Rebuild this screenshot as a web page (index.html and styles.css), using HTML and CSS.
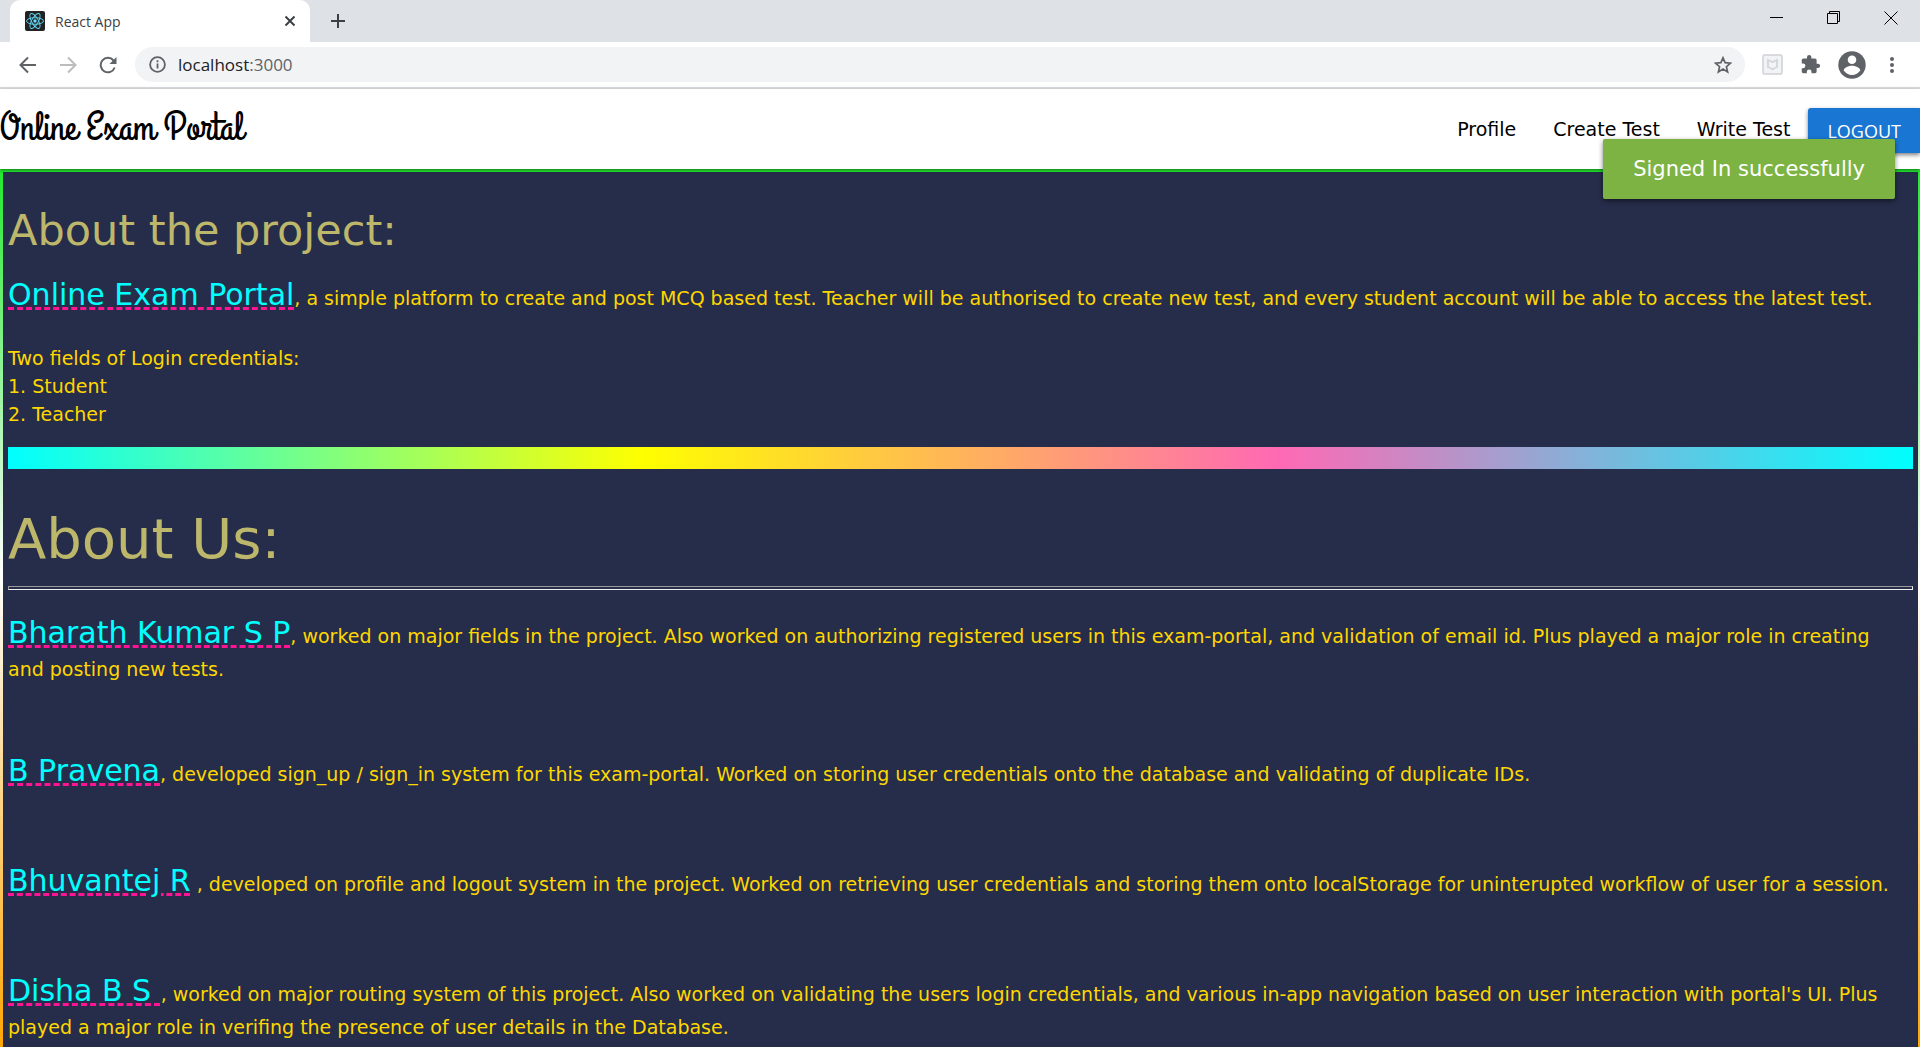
FILE: index.html
```html
<!DOCTYPE html>
<html lang="en">
<head>
<meta charset="utf-8">
<title>React App</title>
<link rel="stylesheet" href="styles.css">
</head>
<body>
<header class="browser">
  <div class="tabstrip">
    <div class="tab">
      <svg class="favicon" width="20" height="20" viewBox="0 0 20 20"><rect width="20" height="20" rx="2" fill="#222"/><g fill="none" stroke="#61dafb" stroke-width="0.9"><ellipse cx="10" cy="10" rx="8.5" ry="3.3"/><ellipse cx="10" cy="10" rx="8.5" ry="3.3" transform="rotate(60 10 10)"/><ellipse cx="10" cy="10" rx="8.5" ry="3.3" transform="rotate(120 10 10)"/></g><circle cx="10" cy="10" r="1.7" fill="#61dafb"/></svg>
      <span class="tab-title">React App</span>
      <button class="icon-btn" aria-label="Close tab"><svg width="12" height="12" viewBox="0 0 12 12"><path d="M1.5 1.5l9 9M10.5 1.5l-9 9" stroke="#3c4043" stroke-width="2"/></svg></button>
    </div>
    <button class="icon-btn new-tab" aria-label="New tab"><svg width="16" height="16" viewBox="0 0 16 16"><path d="M8 1v14M1 8h14" stroke="#3c4043" stroke-width="2"/></svg></button>
    <div class="window-controls">
      <button class="icon-btn" aria-label="Minimize"><svg width="14" height="14" viewBox="0 0 14 14"><path d="M0 6.5h13" stroke="#000"/></svg></button>
      <button class="icon-btn" aria-label="Restore"><svg width="14" height="14" viewBox="0 0 14 14"><path d="M.5 2.500h10v10h-10zM2.500 2.500v-2h10v10h-2" fill="none" stroke="#000"/></svg></button>
      <button class="icon-btn" aria-label="Close"><svg width="14" height="14" viewBox="0 0 14 14"><path d="M.5.5l13 13M13.500.5l-13 13" stroke="#000"/></svg></button>
    </div>
  </div>
  <div class="toolbar">
    <div class="nav-buttons">
      <button class="icon-btn" aria-label="Back"><svg width="18" height="18" viewBox="0 0 18 18"><path d="M17 9H2M9 1.500L1.500 9 9 16.500" fill="none" stroke="#5f6368" stroke-width="2"/></svg></button>
      <button class="icon-btn" aria-label="Forward"><svg width="18" height="18" viewBox="0 0 18 18"><path d="M1 9h15M9 1.500L16.500 9 9 16.500" fill="none" stroke="#babcbe" stroke-width="2"/></svg></button>
      <button class="icon-btn" aria-label="Reload"><svg width="18" height="18" viewBox="0 0 18 18"><path d="M15.700 11.500A7.200 7.200 0 1 1 14.500 4.500" fill="none" stroke="#5f6368" stroke-width="2"/><path d="M17.500 1v7h-7z" fill="#5f6368"/></svg></button>
    </div>
    <div class="address">
      <svg width="17" height="17" viewBox="0 0 17 17"><circle cx="8.500" cy="8.500" r="7.400" fill="none" stroke="#5f6368" stroke-width="1.800"/><path d="M8.500 7.500v5M8.500 4.300v1.900" stroke="#5f6368" stroke-width="1.800"/></svg>
      <span class="url">localhost<span class="port">:3000</span></span>
      <button class="icon-btn star" aria-label="Bookmark"><svg width="18" height="18" viewBox="0 0 18 18"><path d="M9 1.800l2.100 4.900 5.300.5-4 3.500 1.200 5.200L9 13.100l-4.600 2.800 1.200-5.200-4-3.500 5.300-.5z" fill="none" stroke="#5f6368" stroke-width="1.700"/></svg></button>
    </div>
    <div class="extensions">
      <button class="icon-btn" aria-label="Shield"><svg width="21" height="21" viewBox="0 0 21 21"><rect x="1" y="1" width="19" height="19" rx="1.500" fill="#f1f3f4" stroke="#ced1d5" stroke-width="1.500"/><path d="M6 6l4.500 2L15 6v7l-4.500 2.200L6 13z" fill="none" stroke="#d3d6d9" stroke-width="1.800"/></svg></button>
      <button class="icon-btn" aria-label="Extensions"><svg width="21" height="21" viewBox="0 0 24 24"><path fill="#5f6368" d="M20.500 11H19V7c0-1.100-.9-2-2-2h-4V3.500a2.500 2.500 0 0 0-5 0V5H4c-1.100 0-2 .9-2 2v3.800h1.500a2.700 2.700 0 0 1 0 5.400H2V20c0 1.100.9 2 2 2h3.800v-1.500a2.700 2.700 0 0 1 5.400 0V22H17c1.100 0 2-.9 2-2v-4h1.500a2.500 2.500 0 0 0 0-5z"/></svg></button>
      <button class="icon-btn" aria-label="Account"><svg width="28" height="28" viewBox="0 0 28 28"><circle cx="14" cy="14" r="13.700" fill="#5f6368"/><circle cx="14" cy="8.700" r="4.300" fill="#fff"/><path d="M5.700 19.500c0-3 5.300-4.800 8.300-4.800s8.300 1.800 8.300 4.800a10 10 0 0 1-16.600 0z" fill="#fff"/></svg></button>
      <button class="icon-btn" aria-label="Menu"><svg width="18" height="18" viewBox="0 0 18 18"><g fill="#5f6368"><circle cx="9" cy="3" r="2"/><circle cx="9" cy="9" r="2"/><circle cx="9" cy="15" r="2"/></g></svg></button>
    </div>
  </div>
</header>
<nav class="navbar">
  <a class="brand" href="#">Online Exam Portal</a>
  <div class="links">
    <a href="#">Profile</a>
    <a href="#">Create Test</a>
    <a href="#">Write Test</a>
    <div class="logout-wrap"><button class="logout">LOGOUT</button><div class="toast" role="status">Signed In successfully</div></div>
  </div>
</nav>
<main class="about">
  <h2 class="project-title">About the project:</h2>
  <p class="entry"><span class="name">Online Exam Portal</span>, a simple platform to create and post MCQ based test. Teacher will be authorised to create new test, and every student account will be able to access the latest test.</p>
  <p class="fields">Two fields of Login credentials:<br>1. Student<br>2. Teacher</p>
  <div class="rainbow"></div>
  <h1 class="us-title">About Us:</h1>
  <hr class="rule">
  <section class="people">
    <p class="entry"><span class="name">Bharath Kumar S P</span>, worked on major fields in the project. Also worked on authorizing registered users in this exam-portal, and validation of email id. Plus played a major role in creating and posting new tests.</p>
    <p class="entry"><span class="name">B Pravena</span>, developed sign_up / sign_in system for this exam-portal. Worked on storing user credentials onto the database and validating of duplicate IDs.</p>
    <p class="entry"><span class="name">Bhuvantej R</span> , developed on profile and logout system in the project. Worked on retrieving user credentials and storing them onto localStorage for uninterupted workflow of user for a session.</p>
    <p class="entry"><span class="name">Disha B S </span>, worked on major routing system of this project. Also worked on validating the users login credentials, and various in-app navigation based on user interaction with portal's UI. Plus played a major role in verifing the presence of user details in the Database.</p>
  </section>
</main>
</body>
</html>
```
FILE: styles.css
```css
* { box-sizing: border-box; }
html, body { margin: 0; }
body {
  min-height: 100vh;
  display: flex;
  flex-direction: column;
  background: #fff;
  font-family: Verdana, "DejaVu Sans", sans-serif;
}
.icon-btn { display: flex; align-items: center; justify-content: center; padding: 0; border: 0; background: none; }
.icon-btn svg { display: block; }

.browser { flex: none; border-bottom: 2px solid #dadce0; background: #fff; font-family: "Segoe UI", "Open Sans", sans-serif; }
.tabstrip { display: flex; align-items: center; height: 42px; padding-left: 10px; background: #dee1e6; }
.tab { display: flex; align-items: center; gap: 10px; width: 300px; height: 42px; padding: 0 14px 0 15px; border-radius: 10px 10px 0 0; background: #fff; }
.tab-title { flex: 1; font-size: 14px; color: #3c4043; }
.new-tab { margin-left: 20px; }
.window-controls { display: flex; gap: 43px; margin-left: auto; padding: 0 22px 6px 0; }
.toolbar { display: flex; align-items: center; height: 45px; padding-right: 19px; }
.nav-buttons { display: flex; gap: 22px; padding: 0 18px 0 19px; }
.address { display: flex; flex: 1; align-items: center; gap: 12px; height: 35px; padding: 0 13px 0 14px; border-radius: 18px; background: #f1f3f4; }
.url { flex: 1; font-size: 17px; color: #202124; }
.port { color: #5f6368; }
.extensions { display: flex; align-items: center; gap: 17px; padding-left: 17px; }

.navbar { display: flex; flex: none; justify-content: space-between; height: 80px; background: #fff; box-shadow: 0 2px 2px rgba(0, 0, 0, .14), 0 3px 1px -2px rgba(0, 0, 0, .12), 0 1px 5px rgba(0, 0, 0, .2); z-index: 1; }
.brand { color: #000; text-decoration: none; font-family: "Grand Hotel", cursive; font-size: 40px; line-height: 78px; }
.links { display: flex; align-items: flex-start; }
.links a { padding-right: 37px; color: #000; text-decoration: none; font-size: 19px; line-height: 80px; }
.links a:nth-child(3) { padding-right: 18px; }
.logout-wrap { position: relative; padding-top: 19px; }
.logout { height: 45px; padding: 0 19px; border: 0; border-radius: 3px 0 0 3px; background: #1976d2; color: #fff; font-family: "Segoe UI", "Open Sans", sans-serif; font-size: 18px; box-shadow: 0 2px 4px rgba(0, 0, 0, .5); }
.toast { position: absolute; top: 50px; right: 25px; padding: 0 30px; border-radius: 2px; background: #7cb342; color: #fff; font-size: 21px; line-height: 60px; white-space: nowrap; box-shadow: 0 2px 5px rgba(0, 0, 0, .5); }

.about {
  flex: 1 0 auto;
  padding: 0 5px;
  border: 3px solid;
  border-width: 3px 2px 0 3px;
  border-image: linear-gradient(#22e82f, #fff 46%, orange) 3;
  background: #262d4a;
  color: gold;
  font-size: 19px;
  line-height: 28px;
}
.project-title, .us-title { margin: 0; color: darkkhaki; font-weight: 400; }
.project-title { padding: 34px 0 19px; font-size: 43px; line-height: 48px; }
.us-title { margin-top: 40px; font-size: 56px; line-height: 60px; }
.entry { margin: 0; padding-right: 8px; }
.name { color: aqua; font-size: 30px; line-height: 44px; text-decoration: underline dashed #ff1493 3px; }
.fields { margin: 27px 0 19px; }
.rainbow { height: 22px; background: linear-gradient(90deg, aqua, yellow, hotpink, aqua); }
.rule { height: 4px; margin: 17px 0 21px; border: 1px inset #eee; }
.people { display: grid; gap: 66px; }
```
